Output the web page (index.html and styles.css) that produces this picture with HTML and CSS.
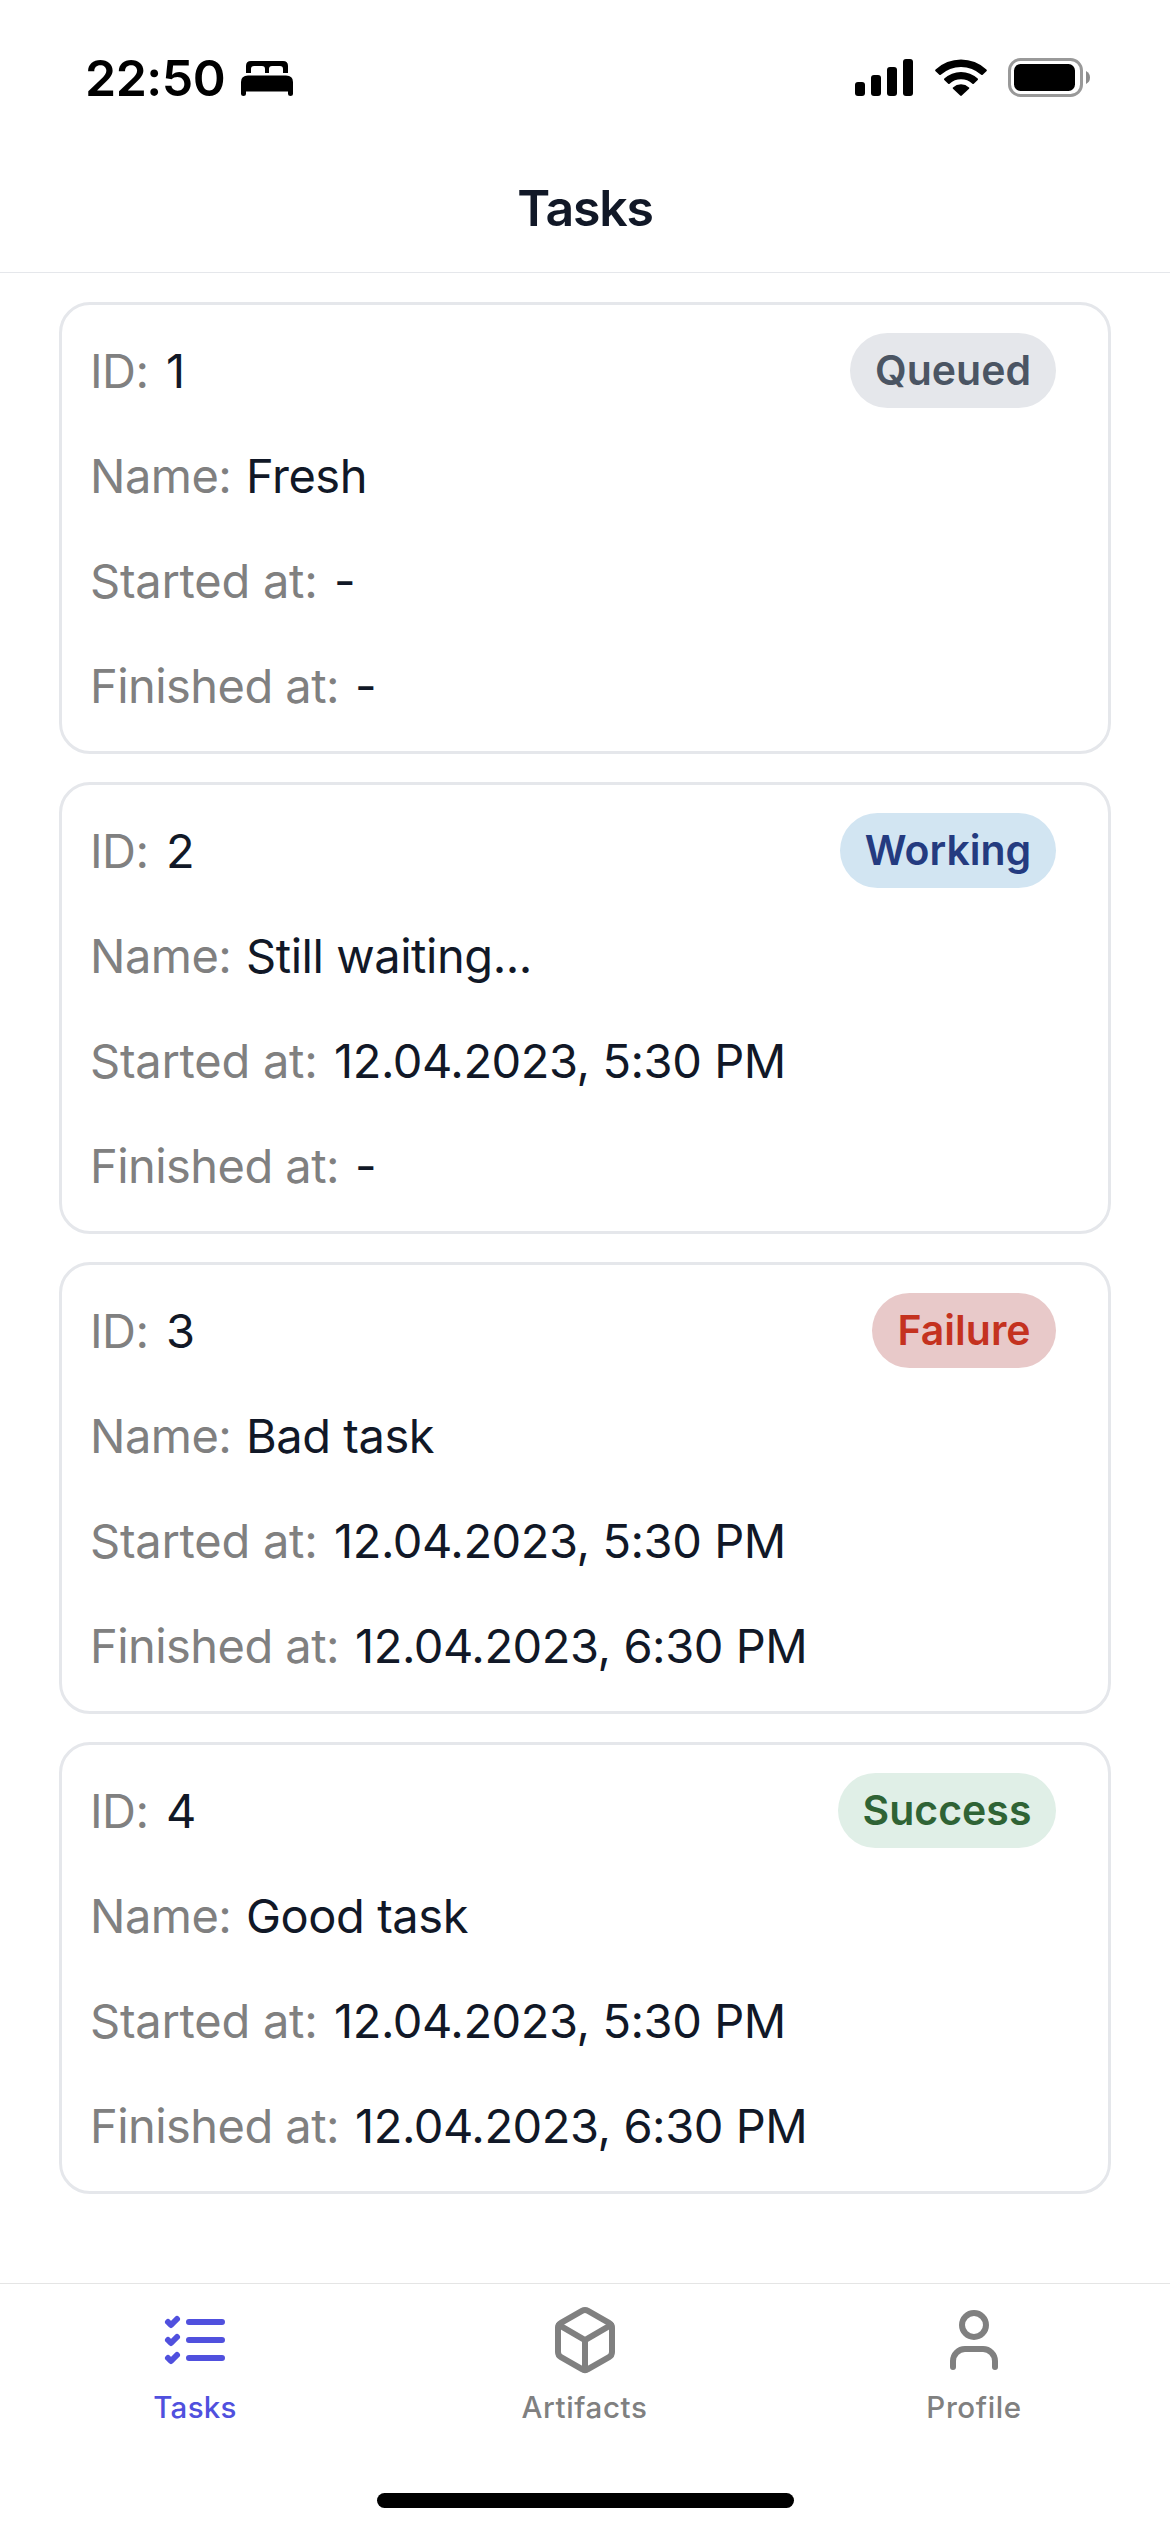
FILE: index.html
```html
<!DOCTYPE html>
<html lang="en">
<head>
<meta charset="utf-8">
<title>Tasks</title>
<link rel="stylesheet" href="styles.css">
</head>
<body>
<div class="status-bar">
  <div class="status-left">
    <span class="clock">22:50</span>
    <svg class="bed" width="52" height="35" viewBox="0 0 52 35"><path d="M5 12V5Q5 0 10 0H42Q47 0 47 5V12H42V8Q42 5 39 5H31Q28 5 28 8V12H24V8Q24 5 21 5H13Q10 5 10 8V12Z"/><path d="M0 21Q0 14.500 7 14.500H45Q52 14.500 52 21V33Q52 35 49.500 35Q47 35 47 33V30.500H5V33Q5 35 2.500 35Q0 35 0 33Z"/></svg>
  </div>
  <div class="status-right">
    <svg width="58" height="37" viewBox="0 0 58 37"><rect x="0" y="23" width="10" height="14" rx="3"/><rect x="16" y="16" width="10" height="21" rx="3"/><rect x="32" y="8" width="10" height="29" rx="3"/><rect x="48" y="0" width="10" height="37" rx="3"/></svg>
    <svg class="wifi" width="52" height="37" viewBox="0 0 52 37"><path d="M.6 10.600Q-.3 11.500.6 12.300L4.300 15.800Q5 16.400 5.800 15.700A30 30 0 0 1 46.200 15.700Q47 16.400 47.700 15.800L51.400 12.300Q52.300 11.500 51.400 10.600A37 37 0 0 0 .6 10.600Z"/><path d="M9.300 19.600Q8.600 20.300 9.300 21L13.200 24.700Q13.900 25.300 14.600 24.700A17 17 0 0 1 37.400 24.700Q38.100 25.300 38.800 24.700L42.700 21Q43.400 20.300 42.700 19.600A24.500 24.500 0 0 0 9.300 19.600Z"/><path d="M18 28.400Q17.300 29.100 18 29.800L25.200 36.600Q26 37.300 26.800 36.600L34 29.800Q34.700 29.100 34 28.400A12 12 0 0 0 18 28.400Z"/></svg>
    <svg class="battery" width="83" height="39" viewBox="0 0 83 39"><rect x="1.500" y="1.500" width="72" height="36" rx="11" fill="none" stroke="#999" stroke-width="3"/><rect x="6" y="6" width="61" height="27" rx="6.500"/><path d="M78 13Q82 15 82 19.500T78 26Z" fill="#8c8c8c"/></svg>
  </div>
</div>
<header class="header"><h1 class="title">Tasks</h1></header>
<main class="list">
  <section class="card">
    <div class="row"><span class="label id">ID:</span><span class="value">1</span><span class="badge queued">Queued</span></div>
    <div class="row"><span class="label name">Name:</span><span class="value">Fresh</span></div>
    <div class="row"><span class="label started">Started at:</span><span class="value">-</span></div>
    <div class="row"><span class="label finished">Finished at:</span><span class="value">-</span></div>
  </section>
  <section class="card">
    <div class="row"><span class="label id">ID:</span><span class="value">2</span><span class="badge working">Working</span></div>
    <div class="row"><span class="label name">Name:</span><span class="value">Still waiting...</span></div>
    <div class="row"><span class="label started">Started at:</span><span class="value">12.04.2023, 5:30 PM</span></div>
    <div class="row"><span class="label finished">Finished at:</span><span class="value">-</span></div>
  </section>
  <section class="card">
    <div class="row"><span class="label id">ID:</span><span class="value">3</span><span class="badge failure">Failure</span></div>
    <div class="row"><span class="label name">Name:</span><span class="value">Bad task</span></div>
    <div class="row"><span class="label started">Started at:</span><span class="value">12.04.2023, 5:30 PM</span></div>
    <div class="row"><span class="label finished">Finished at:</span><span class="value">12.04.2023, 6:30 PM</span></div>
  </section>
  <section class="card">
    <div class="row"><span class="label id">ID:</span><span class="value">4</span><span class="badge success">Success</span></div>
    <div class="row"><span class="label name">Name:</span><span class="value">Good task</span></div>
    <div class="row"><span class="label started">Started at:</span><span class="value">12.04.2023, 5:30 PM</span></div>
    <div class="row"><span class="label finished">Finished at:</span><span class="value">12.04.2023, 6:30 PM</span></div>
  </section>
</main>
<nav class="tabs">
  <a class="tab active"><svg class="icon" viewBox="0 0 24 24"><path d="M10 6H21M10 12H21M10 18H21M3 6L4 7L6 5M3 12L4 13L6 11M3 18L4 19L6 17"/></svg><span>Tasks</span></a>
  <a class="tab"><svg class="icon" viewBox="0 0 24 24"><path d="M21 16V8a2 2 0 0 0-1-1.730l-7-4a2 2 0 0 0-2 0l-7 4A2 2 0 0 0 3 8v8a2 2 0 0 0 1 1.730l7 4a2 2 0 0 0 2 0l7-4A2 2 0 0 0 21 16z"/><path d="M3.270 6.960L12 12.010L20.730 6.960M12 22.080V12"/></svg><span>Artifacts</span></a>
  <a class="tab"><svg class="icon" viewBox="0 0 24 24"><circle cx="12" cy="7" r="4"/><path d="M19 21v-2a4 4 0 0 0-4-4H9a4 4 0 0 0-4 4v2"/></svg><span>Profile</span></a>
</nav>
<footer class="home"><div class="home-bar"></div></footer>
</body>
</html>
```
FILE: styles.css
```css
* { box-sizing: border-box; }
body {
  margin: 0;
  width: 1170px;
  height: 2532px;
  display: flex;
  flex-direction: column;
  overflow: hidden;
  background: #fff;
  color: #111827;
  font-family: Inter, "Liberation Sans", sans-serif;
}
svg { display: block; flex: none; }
.status-bar {
  height: 141px;
  padding: 0 79px 0 85px;
  display: flex;
  justify-content: space-between;
  color: #000;
}
.status-left, .status-right { display: flex; align-items: flex-start; }
.status-left { padding-top: 48px; }
.status-right { padding-top: 59px; }
.clock { width: 156px; font-size: 50px; line-height: 60px; font-weight: 600; letter-spacing: -0.5px; }
.bed { margin-top: 13px; }
.wifi { margin-left: 22px; }
.battery { margin: -1px 0 0 21px; }
.header {
  height: 132px;
  display: flex;
  justify-content: center;
  border-bottom: 1px solid #e5e7eb;
}
.title { margin: 37px 0 0; font-size: 50px; line-height: 60px; font-weight: 600; letter-spacing: -1.2px; }
.list {
  height: 2010px;
  padding: 29px 59px 0;
  display: flex;
  flex-direction: column;
  gap: 28px;
}
.card {
  height: 452px;
  padding: 28px 52px 28px 28px;
  display: flex;
  flex-direction: column;
  gap: 30px;
  border: 3px solid #e5e7eb;
  border-radius: 31px;
}
.row { display: flex; height: 75px; font-size: 47px; line-height: 75px; white-space: nowrap; }
.label { color: #808080; letter-spacing: -0.5px; }
.value { letter-spacing: -0.45px; }
.id { width: 76px; }
.name { width: 156px; }
.started { width: 244px; letter-spacing: -0.25px; }
.finished { width: 265px; letter-spacing: -0.55px; }
.badge {
  margin-left: auto;
  border-radius: 38px;
  text-align: center;
  font-size: 41px;
  line-height: 75px;
  font-weight: 600;
}
.queued { width: 206px; background: #e5e7eb; color: #4b5563; }
.working { width: 216px; background: #d2e5f2; color: #243b80; }
.failure { width: 184px; background: #e8c9c9; color: #c4321f; }
.success { width: 218px; background: #e0efe7; color: #2f6335; }
.tabs {
  height: 180px;
  padding-top: 20px;
  display: grid;
  grid-template-columns: 390px 389px 390px;
  border-top: 1px solid #e5e5e5;
}
.tab {
  display: flex;
  flex-direction: column;
  align-items: center;
  color: #808080;
  font-size: 29.5px;
  line-height: 36px;
  font-weight: 500;
  letter-spacing: 0.6px;
}
.tab span { margin-top: 13px; }
.tab.active { color: #5050de; letter-spacing: 0.3px; }
.icon {
  width: 72px;
  height: 72px;
  fill: none;
  stroke: currentColor;
  stroke-width: 2;
  stroke-linecap: round;
  stroke-linejoin: round;
}
.home { height: 69px; padding: 30px 0 0 377px; }
.home-bar { width: 417px; height: 15px; border-radius: 8px; background: #000; }
```
